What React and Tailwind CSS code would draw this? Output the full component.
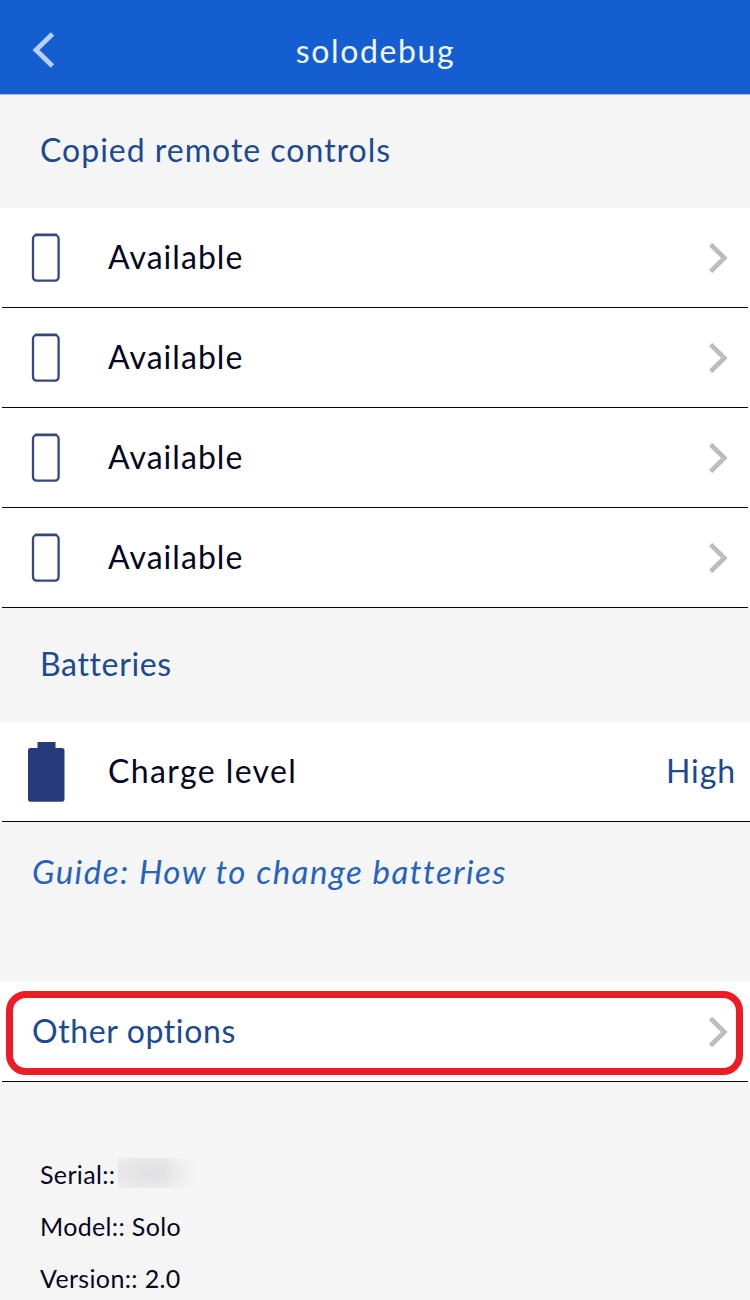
import React from "react";

const remotes = [
    { id: 1, label: "Available" },
    { id: 2, label: "Available" },
    { id: 3, label: "Available" },
    { id: 4, label: "Available" },
];

const ChevronRight = () => (
    <svg width="20" height="32" viewBox="0 0 20 32" fill="none" className="shrink-0">
        <path d="M1.600 2.500 L15.400 16 L1.600 29.500" stroke="#bdbdbd" strokeWidth="4.600" />
    </svg>
);

const RemoteIcon = () => (
    <svg width="30" height="50" viewBox="0 0 30 50" fill="none" className="shrink-0">
        <rect x="2" y="2.2" width="25.6" height="45.4" rx="3.5" stroke="#36487f" strokeWidth="2.3" />
        <path d="M4 1.4 H26" stroke="#36487f" strokeWidth="1.8" />
    </svg>
);

const BatteryIcon = () => (
    <svg width="37" height="60" viewBox="0 0 37 60" className="shrink-0">
        <path
            d="M9.5 0 H27.500 V6 H34 Q36.500 6 36.500 8.500 V57 Q36.500 59.800 34 59.800 H2.500 Q0 59.800 0 57 V8.500 Q0 6 2.500 6 H9.500 Z"
            fill="#263a7b"
        />
    </svg>
);

const Row = ({ children, lineClassName = "mx-0.5" }) => (
    <div className="relative h-[100px] bg-white">
        <div className="flex h-[99px] items-center">{children}</div>
        <div className={`h-px bg-[#05050f] ${lineClassName}`} />
    </div>
);

const SectionTitle = ({ children, className = "" }) => (
    <h2 className={`flex h-[114px] items-center pl-10 text-[32px] leading-10 text-[#1c4a91] ${className}`}>
        {children}
    </h2>
);

const App = () => {
    return (
        <div className="h-[1300px] w-[750px] overflow-hidden bg-[#f5f5f5] font-['Lato',sans-serif] text-[#06061f]">
            {/* Header */}
            <header className="flex h-[94px] items-center bg-[#155ed2] pl-8">
                <svg width="24" height="38" viewBox="0 0 24 38" fill="none" className="mt-[5px] shrink-0">
                    <path d="M20.500 3 L4 19 L20.500 35" stroke="#b9d2fb" strokeWidth="4.800" />
                </svg>
                <h1 className="mt-[7px] flex-1 pr-[55px] text-center text-[32px] leading-10 tracking-[1.6px] text-[#f0f8ff]">
                    solodebug
                </h1>
            </header>

            <SectionTitle className="border-t border-[#a9bee0] pb-1 tracking-[1px]">Copied remote controls</SectionTitle>
            {remotes.map((remote) => (
                <Row key={remote.id}>
                    <div className="flex w-[108px] pl-[31px]">
                        <RemoteIcon />
                    </div>
                    <span className="flex-1 pb-0.5 text-[32px] leading-10 tracking-[1.05px]">{remote.label}</span>
                    <div className="pr-[21px]">
                        <ChevronRight />
                    </div>
                </Row>
            ))}

            <SectionTitle className="pb-0.5 tracking-[0.65px]">Batteries</SectionTitle>
            <Row lineClassName="ml-0.5">
                <div className="flex w-[108px] pl-7">
                    <BatteryIcon />
                </div>
                <span className="flex-1 pb-0.5 text-[32px] leading-10 tracking-[1.4px]">Charge level</span>
                <span className="pr-[14px] pb-0.5 text-[32px] leading-10 tracking-[0.9px] text-[#1c4a91]">High</span>
            </Row>

            <div className="h-[160px] pl-8 pt-[29px]">
                <a className="text-[33px] leading-10 italic tracking-[1.5px] text-[#2563bc]">
                    Guide: How to change batteries
                </a>
            </div>

            {/* Highlighted entry */}
            <Row>
                <span className="flex-1 pb-0.5 pl-8 text-[32px] leading-10 tracking-[0.62px] text-[#1c4a91]">
                    Other options
                </span>
                <div className="pr-[21px]">
                    <ChevronRight />
                </div>
                <div className="absolute top-[9px] left-[6px] h-[84px] w-[737px] rounded-[20px] border-[7px] border-[#ed1c24]" />
            </Row>

            {/* Device info */}
            <div className="pt-[66px] pl-10 text-[25px] leading-[52px] tracking-[0.35px]">
                <div className="flex items-center">
                    <span>Serial::</span>
                    <span className="mb-0.5 ml-[3px] h-[30px] w-[78px] bg-[linear-gradient(90deg,transparent_60%,#f5f5f5_100%),radial-gradient(ellipse_at_45%_50%,#e0e0e2_0%,#e8e8e9_60%,#efefef_100%)]" />
                </div>
                <p>Model:: Solo</p>
                <p>Version:: 2.0</p>
            </div>
        </div>
    );
};

export default App;
